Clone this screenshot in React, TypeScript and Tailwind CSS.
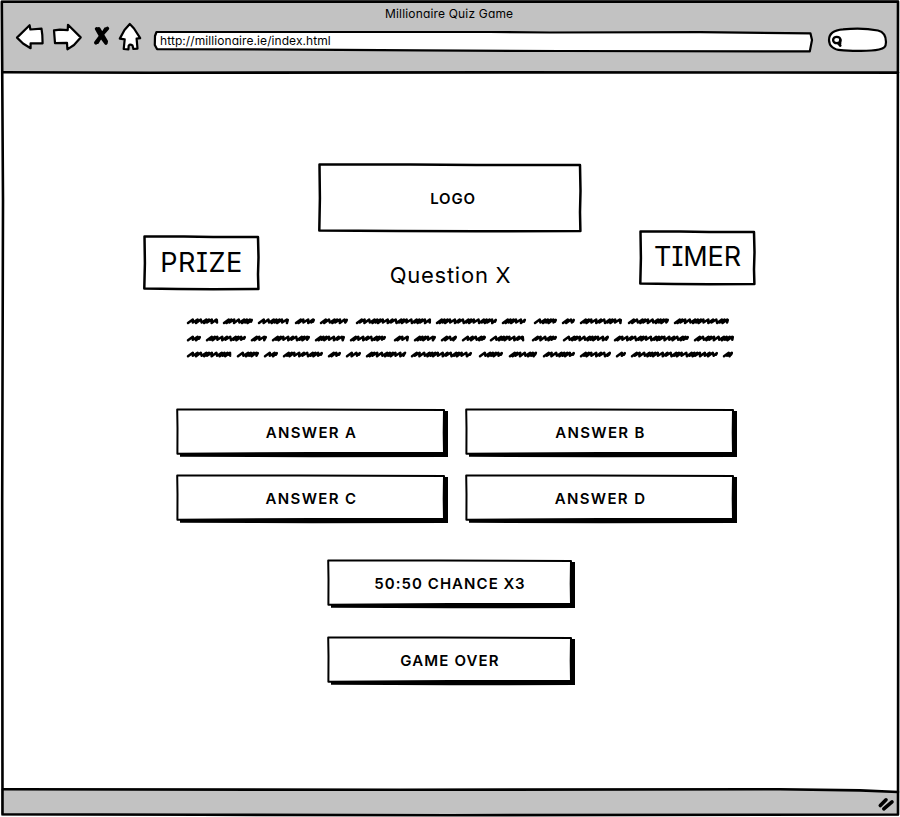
import type { ReactNode } from "react";

const FONT =
  "font-['Inter','Lato',sans-serif] [font-feature-settings:'cv08','cv11'] text-black";

const INK = {
  fill: "none",
  stroke: "#000",
  strokeLinejoin: "round" as const,
  strokeLinecap: "round" as const,
};

/* Rectangle with slightly uneven hand-inked edges. */
function Panel({ w, h, className, children }: { w: number; h: number; className: string; children: ReactNode }) {
  const r = w - 2;
  const b = h - 2;
  return (
    <div className={`relative flex items-center justify-center ${className}`}>
      <svg className="absolute inset-0" width={w} height={h} aria-hidden="true">
        <path {...INK} strokeWidth="2.5" d={`M1.5 1.4 L${w * 0.35} 1.5 L${w * 0.6} 2.1 L${r} 2.1 L${r + 0.5} ${h * 0.4} L${r} ${h * 0.7} L${r + 0.4} ${b} L${w * 0.6} ${b + 0.2} L${w * 0.3} ${b - 0.1} L1.3 ${b - 0.6} L1.9 ${h * 0.5} Z`} />
      </svg>
      <span className="relative">{children}</span>
    </div>
  );
}

/* Push button with a solid ink shadow on its right and bottom edges. */
function SketchButton({ w, className, children }: { w: number; className: string; children: ReactNode }) {
  return (
    <button className={`relative flex h-[50px] items-center justify-center text-[15px] font-semibold ${className}`}>
      <svg className="absolute inset-0" width={w} height="50" aria-hidden="true">
        <path d={`M4 45 H${w - 5} V3 H${w} V49 L${w * 0.5} 49.3 L4 48.8 Z`} />
        <path {...INK} strokeWidth="2" fill="#fff" d={`M1.2 1.4 L${w * 0.45} 1.5 L${w - 4} 2 L${w - 4.3} 25 L${w - 4} 45 L${w * 0.5} 44.9 L1.4 45.8 L1.5 20 Z`} />
      </svg>
      <span className="relative">{children}</span>
    </button>
  );
}

const LINES = [
  {
    y: 320.3,
    words: [[187, 218], [223, 253], [258, 289], [295, 315], [320, 348], [356, 431], [436, 497], [502, 526], [534, 557], [562, 575], [580, 622], [628, 669], [674, 729]],
  },
  {
    y: 337.5,
    words: [[187, 201], [206, 246], [251, 267], [272, 310], [315, 345], [350, 386], [394, 409], [414, 436], [441, 457], [462, 486], [490, 524], [532, 557], [563, 609], [614, 689], [694, 734]],
  },
  {
    y: 353.5,
    words: [[187, 231], [237, 259], [264, 278], [283, 323], [328, 341], [346, 361], [366, 406], [411, 472], [479, 503], [509, 537], [543, 575], [580, 611], [616, 626], [631, 718], [723, 733]],
  },
];

const STEPS = [4.8, 3.2, 5.6, 2.6, 2.8, 4.6, 5.4, 2.7, 3, 2.5, 4.9];

function scribble(x0: number, x1: number, y: number) {
  let x = x0 + 1;
  let i = Math.round(x0) % STEPS.length;
  let d = `M${x} ${y + 1.7}`;
  while (x < x1 - 5.5) {
    const s = STEPS[i % STEPS.length];
    d += ` L${x + 4.8} ${y - 1.8} L${x + s} ${y + (i % 2 ? 1.8 : 1.2)}`;
    x += s;
    i += 1;
  }
  d += ` L${x1 - 1.2} ${y - 1.4} L${x1 - 2} ${y + 0.3}`;
  return d;
}

function QuestionScribble() {
  return (
    <svg className="ml-[183px] mt-[24px] shrink-0" width="554" height="46" viewBox="183 314 554 46" role="img">
      {LINES.map((line) =>
        line.words.map(([a, b]) => (
          <path key={`${line.y}-${a}`} {...INK} strokeWidth="2.5" d={scribble(a, b, line.y)} />
        )),
      )}
    </svg>
  );
}

function NavIcons() {
  return (
    <svg width="130" height="32" viewBox="14 21 130 32" aria-hidden="true">
      <g {...INK} strokeWidth="2.2" fill="#fff">
        <path d="M17 37.6 L29.6 25.2 L30.4 29.5 L41.5 28.6 L42.3 35 L42.6 43.4 L30.6 43.3 L30.6 48.2 L23 43.5 Z" />
        <path d="M80.7 37.4 L68 24.8 L67.7 30.2 L60 29.6 L54 30.3 L55 43.1 L67 42.9 L67.4 49.3 L74 45 Z" />
        <path d="M129.8 24 L134 28.5 L140.2 38.2 L136.6 38.6 L137.5 48.7 L133.4 49 L132.5 45.4 Q130 44 128.7 45.6 L128.4 49.3 L123.7 49 L124.7 39.3 L119.8 38.6 L124.5 30 Z" />
      </g>
      <path {...INK} strokeWidth="3.6" d="M96.6 28.8 Q100 36 106 43 M107.4 28.5 Q101 35 95.8 42.8" />
      <path {...INK} strokeWidth="3.2" d="M98.8 28.6 L106.4 41.4 M105.4 29 L97.4 42.4" />
    </svg>
  );
}

export default function App() {
  return (
    <div className={`relative flex h-[817px] w-[900px] flex-col overflow-hidden bg-white ${FONT}`}>
      <header className="flex h-[73px] shrink-0 flex-col bg-[#c2c2c2]">
        <h1 className="ml-[385px] mt-[6px] h-[15px] whitespace-nowrap text-[12px] leading-[16px] tracking-[0.17px]">
          Millionaire Quiz Game
        </h1>
        <div className="flex h-[32px] pl-[14px]">
          <NavIcons />
          <div className="relative ml-[8px] mt-[8px] flex h-[24px] w-[662px] items-center pl-[8px]">
            <svg className="absolute inset-0" width="662" height="24" viewBox="152 29 662 24" aria-hidden="true">
              <path {...INK} strokeWidth="2.2" fill="#fff" d="M156.5 32 L490 32 L550 32.5 L700 32.2 L810.5 33.4 L812 40 L809.8 51.4 L560 51 L420 50.4 L300 49.6 L157 49.1 L154.8 45 L155 36 Z" />
            </svg>
            <span className="relative whitespace-nowrap text-[12px] leading-[16px] tracking-[0.08px]">http://millionaire.ie/index.html</span>
          </div>
          <svg className="ml-[12px] mt-[6px]" width="62" height="26" viewBox="826 28 62 26" aria-hidden="true">
            <path {...INK} strokeWidth="2.2" fill="#fff" d="M829 41 C829 34 835 31 843 30.4 C855 29 868 29.5 878 31.5 C884 33 886 38 886 43 C886 48 884 49.5 879 50.5 C868 53 852 51.8 841 51.2 C834 51 829 47 829 41 Z" />
            <ellipse {...INK} strokeWidth="2.3" cx="836.8" cy="41" rx="3.7" ry="3.2" />
            <path {...INK} strokeWidth="2.6" d="M838.3 44.4 L840.3 46.6 M840.2 41 L840 45" />
          </svg>
        </div>
      </header>

      <main className="flex grow flex-col pt-[90px]">
        <section className="flex items-start pl-[143px]">
          <Panel w={117} h={56} className="mt-[72px] h-[56px] w-[117px] text-[27px] leading-[32px] tracking-[0.6px]">
            PRIZE
          </Panel>
          <div className="ml-[58px] flex w-[264px] flex-col items-center">
            <Panel w={264} h={70} className="h-[70px] w-[264px] pl-[6px] pt-[2px] text-[15px] font-semibold leading-[20px] tracking-[0.8px]">
              LOGO
            </Panel>
            <h2 className="mt-[26px] h-[32px] whitespace-nowrap pl-px text-[22px] leading-[32px] tracking-[0.75px]">Question X</h2>
          </div>
          <Panel w={117} h={56} className="ml-[57px] mt-[67px] h-[56px] w-[117px] pb-[2px] text-[27px] leading-[32px] tracking-[-0.1px]">
            TIMER
          </Panel>
        </section>

        <QuestionScribble />

        <section className="ml-[176px] mt-[47px] grid w-[561px] grid-cols-[272px_272px] gap-x-[17px] gap-y-[16px]">
          <SketchButton w={272} className="pr-[1px] tracking-[1.35px]">ANSWER A</SketchButton>
          <SketchButton w={272} className="pr-[1px] tracking-[1.35px]">ANSWER B</SketchButton>
          <SketchButton w={272} className="pr-[1px] tracking-[1.35px]">ANSWER C</SketchButton>
          <SketchButton w={272} className="pr-[1px] tracking-[1.35px]">ANSWER D</SketchButton>
        </section>

        <section className="ml-[327px] mt-[35px] flex w-[248px] flex-col gap-[27px]">
          <SketchButton w={248} className="pr-[2px] tracking-[1.05px]">50:50 CHANCE X3</SketchButton>
          <SketchButton w={248} className="pr-[2px] tracking-[1.15px]">GAME OVER</SketchButton>
        </section>
      </main>

      <footer className="h-[28px] shrink-0 bg-[#c2c2c2]" />

      <svg className="pointer-events-none absolute inset-0" width="900" height="817" aria-hidden="true">
        <path fill="#fff" d="M780 788 L898 788 L898 792 Z" />
        <path fill="#fff" d="M0 0 H1 V817 H0 Z M899 0 H900 V817 H899 Z M0 816 H900 V817 H0 Z" />
        <path {...INK} strokeWidth="2.6" d="M1.8 1.7 L898 1.6 L897.6 300 L898.2 600 L898 814.5 L450 815.2 L200 814.8 L2.5 814.3 L2.2 500 L3 200 Z" />
        <path {...INK} strokeWidth="2.6" d="M3 72.2 L150 72.7 L500 72.4 L898 72.6 M3 789.3 L400 789.8 L780 789.2 L860 790.4 L898 792" />
        <path {...INK} strokeWidth="3.6" d="M880.3 805.5 L886 799.8 M883.8 808.8 L892 801.8" />
      </svg>
    </div>
  );
}
